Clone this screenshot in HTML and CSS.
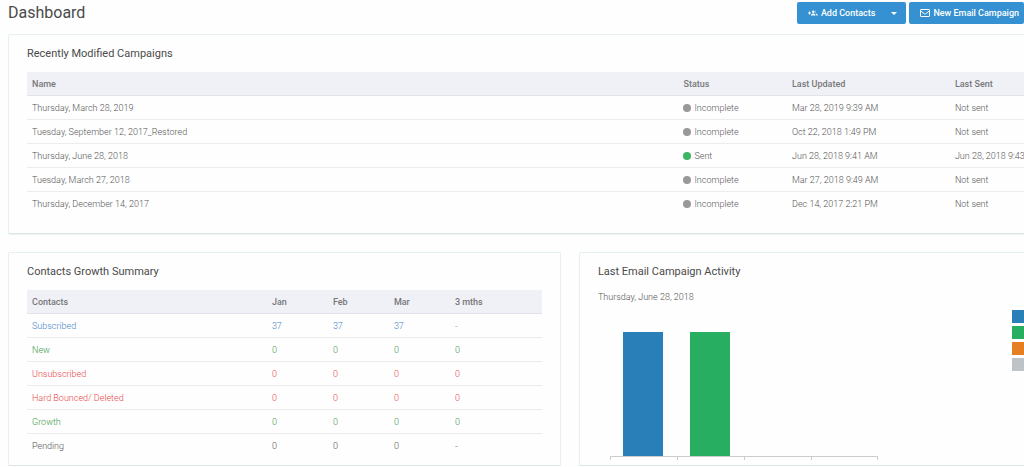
FILE: index.html
```html
<!DOCTYPE html>
<html lang="en">
<head>
    <meta charset="UTF-8">
    <meta name="viewport" content="width=device-width, initial-scale=1.0">
    <title>Dashboard</title>
    <link rel="stylesheet" href="styles.css">
</head>
<body>
    <header class="topbar">
        <h1>Dashboard</h1>
        <div class="actions">
            <div class="btn-group">
                <button type="button" class="btn btn-contacts">
                    <svg width="10" height="8" viewBox="0 0 20 16" fill="currentColor" aria-hidden="true">
                        <path d="M0 7h2V5h2v2h2v2H4v2H2V9H0z"/>
                        <circle cx="10.500" cy="5.500" r="2.500"/>
                        <path d="M6 13c0-2.800 2-4 4.500-4s4.500 1.200 4.500 4z"/>
                        <path d="M14 3.200a2.500 2.500 0 0 1 0 4.600 5 5 0 0 0 0-4.600zM15.500 9.200c2.500.4 4 1.600 4 3.800h-3c0-1.700-.3-2.800-1-3.800z"/>
                    </svg>
                    Add Contacts
                </button>
                <button type="button" class="btn btn-toggle" aria-label="More contact options"><span class="caret"></span></button>
            </div>
            <button type="button" class="btn btn-campaign">
                <svg width="10" height="8" viewBox="0 0 20 16" fill="none" stroke="currentColor" stroke-width="2" aria-hidden="true">
                    <rect x="1" y="1" width="18" height="14" rx="1"/>
                    <path d="M2 4.500l6.500 5q1.500 1 3 0l6.500-5"/>
                </svg>
                New Email Campaign
            </button>
        </div>
    </header>

    <main class="dashboard">
        <section class="card campaigns">
            <h2>Recently Modified Campaigns</h2>
            <table class="campaign-table">
                <thead>
                    <tr><th class="col-name">Name</th><th class="col-status">Status</th><th>Last Updated</th><th>Last Sent</th></tr>
                </thead>
                <tbody>
                    <tr><td>Thursday, March 28, 2019</td><td><span class="dot"></span>Incomplete</td><td>Mar 28, 2019 9:39 AM</td><td>Not sent</td></tr>
                    <tr><td>Tuesday, September 12, 2017_Restored</td><td><span class="dot"></span>Incomplete</td><td>Oct 22, 2018 1:49 PM</td><td>Not sent</td></tr>
                    <tr><td>Thursday, June 28, 2018</td><td><span class="dot dot-sent"></span>Sent</td><td>Jun 28, 2018 9:41 AM</td><td>Jun 28, 2018 9:43 AM</td></tr>
                    <tr><td>Tuesday, March 27, 2018</td><td><span class="dot"></span>Incomplete</td><td>Mar 27, 2018 9:49 AM</td><td>Not sent</td></tr>
                    <tr><td>Thursday, December 14, 2017</td><td><span class="dot"></span>Incomplete</td><td>Dec 14, 2017 2:21 PM</td><td>Not sent</td></tr>
                </tbody>
            </table>
        </section>

        <section class="card growth">
            <h2>Contacts Growth Summary</h2>
            <table class="growth-table">
                <thead>
                    <tr><th>Contacts</th><th class="col-month">Jan</th><th class="col-month">Feb</th><th class="col-month">Mar</th><th class="col-total">3 mths</th></tr>
                </thead>
                <tbody>
                    <tr class="blue"><td>Subscribed</td><td>37</td><td>37</td><td>37</td><td>-</td></tr>
                    <tr class="green"><td>New</td><td>0</td><td>0</td><td>0</td><td>0</td></tr>
                    <tr class="red"><td>Unsubscribed</td><td>0</td><td>0</td><td>0</td><td>0</td></tr>
                    <tr class="red"><td>Hard Bounced/ Deleted</td><td>0</td><td>0</td><td>0</td><td>0</td></tr>
                    <tr class="green"><td>Growth</td><td>0</td><td>0</td><td>0</td><td>0</td></tr>
                    <tr><td>Pending</td><td>0</td><td>0</td><td>0</td><td>-</td></tr>
                </tbody>
            </table>
        </section>

        <section class="card activity">
            <h2>Last Email Campaign Activity</h2>
            <p class="campaign-date">Thursday, June 28, 2018</p>
            <div class="chart">
                <div class="plot">
                    <div class="slot"><div class="bar fill-blue" style="height: 100%"></div></div>
                    <div class="slot"><div class="bar fill-green" style="height: 100%"></div></div>
                    <div class="slot"><div class="bar fill-orange" style="height: 0%"></div></div>
                    <div class="slot"><div class="bar fill-grey" style="height: 0%"></div></div>
                </div>
                <ul class="legend">
                    <li class="fill-blue"></li>
                    <li class="fill-green"></li>
                    <li class="fill-orange"></li>
                    <li class="fill-grey"></li>
                </ul>
            </div>
        </section>
    </main>
</body>
</html>
```
FILE: styles.css
```css
* {
    box-sizing: border-box;
}

body {
    margin: 0;
    padding-left: 8px;
    font-family: Roboto, "Liberation Sans", sans-serif;
    font-size: 9px;
    font-weight: 300;
    line-height: 12px;
    color: #555;
    background-color: #fefefe;
    overflow: hidden;
}

h1, h2, p, ul {
    margin: 0;
    padding: 0;
}

h1 {
    font-size: 16px;
    font-weight: 400;
    line-height: 26px;
    color: #4a4a4a;
}

h2 {
    font-size: 11px;
    font-weight: 400;
    line-height: 16px;
    color: #4a4a4a;
}

/* top bar */
.topbar {
    display: flex;
    justify-content: space-between;
    height: 34px;
}

.actions {
    display: flex;
    gap: 3px;
    padding-top: 2px;
}

.btn-group {
    display: flex;
}

.btn {
    display: flex;
    align-items: center;
    gap: 3px;
    height: 22px;
    padding: 0 9px;
    border: none;
    border-radius: 2px;
    background-color: #3591d1;
    color: white;
    font-family: inherit;
    font-size: 9px;
    font-weight: 500;
    white-space: nowrap;
    cursor: pointer;
}

.btn:hover {
    background-color: #2a7fbb;
}

.btn-contacts {
    padding: 0 7px 0 11px;
    border-radius: 2px 0 0 2px;
}

.btn-toggle {
    border-radius: 0 2px 2px 0;
}

.btn-campaign {
    padding: 0 5px 0 11px;
}

.caret {
    border-left: 3px solid transparent;
    border-right: 3px solid transparent;
    border-top: 3px solid white;
}

/* the cards run past the right edge of the window */
.dashboard {
    display: grid;
    grid-template-columns: 1fr 1fr;
    gap: 18px;
    width: calc(111% - 4px);
}

.card {
    padding: 11px 18px 7px;
    border: 1px solid #e6f0ef;
    border-bottom-color: #dbe6e6;
    border-radius: 2px;
    background-color: #fefefe;
    box-shadow: 0 1px 1px #edf3f3;
}

.campaigns {
    grid-column: 1 / 3;
    padding-bottom: 17px;
}

/* tables */
table {
    width: 100%;
    margin-top: 10px;
    border-collapse: separate;
    border-spacing: 0;
    table-layout: fixed;
}

th, td {
    height: 24px;
    padding: 0 5px;
    text-align: left;
    white-space: nowrap;
    border-bottom: 1px solid #ececee;
}

th {
    font-weight: 500;
    color: #777;
    background-color: #f0f1f7;
    border-bottom-color: #e0e3e9;
}

tbody tr:last-child td {
    border-bottom: none;
}

.col-name {
    width: 60%;
}

.col-status {
    width: 10%;
}

.col-month {
    width: 61px;
}

.col-total {
    width: 92px;
}

.dot {
    display: inline-block;
    width: 8px;
    height: 8px;
    margin-right: 3px;
    border-radius: 50%;
    background-color: #999;
    vertical-align: -1px;
}

.dot-sent {
    background-color: #3cb465;
}

.blue {
    color: #4384ca;
}

.green {
    color: #3a9a48;
}

.red {
    color: #ea4848;
}

/* chart */
.campaign-date {
    margin-top: 11px;
}

.chart {
    display: flex;
    justify-content: space-between;
    margin-top: 7px;
}

.plot {
    display: flex;
    width: 52%;
    margin-left: 12px;
    padding-top: 22px;
}

.slot {
    display: flex;
    flex: 1;
    position: relative;
    align-items: flex-end;
    justify-content: center;
    height: 125px;
    border-bottom: 1px solid #ccc;
}

/* axis ticks */
.slot::before, .slot:last-child::after {
    content: "";
    position: absolute;
    top: 100%;
    left: 0;
    width: 1px;
    height: 4px;
    background-color: #ccc;
}

.slot:last-child::after {
    left: auto;
    right: 0;
}

.bar {
    width: 60%;
}

.legend {
    width: 20%;
    padding-left: 2px;
    list-style: none;
}

.legend li {
    width: 24px;
    height: 13px;
    margin-bottom: 3px;
}

.fill-blue {
    background-color: #2980b9;
}

.fill-green {
    background-color: #27ae60;
}

.fill-orange {
    background-color: #e67e22;
}

.fill-grey {
    background-color: #bdc3c7;
}
```
